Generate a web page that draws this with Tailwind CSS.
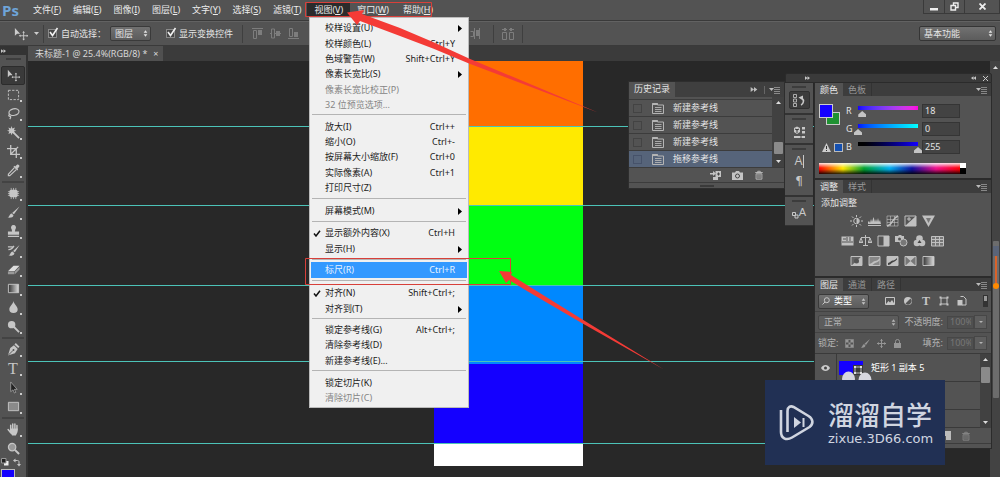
<!DOCTYPE html>
<html lang="zh-CN">
<head>
<meta charset="utf-8">
<title>Photoshop</title>
<script src="https://cdn.jsdelivr.net/npm/@tailwindcss/browser@4"></script>
</head>
<body class="relative flex h-screen flex-col overflow-hidden bg-[#282828] font-['Noto_Sans','Noto_Sans_CJK_SC',sans-serif] text-[9px] leading-[14px] text-[#e4e4e4]">

<svg class="hidden">
  <symbol id="i-move" viewBox="0 0 16 16"><path d="M1 1v9l2.500-2.300H7z" fill="currentColor"/><path d="M11 5.500v9M6.500 10h9" stroke="currentColor" fill="none"/><path d="M11 4.500 9.500 6.500h3zM11 15.500l-1.500-2h3zM5.500 10l2-1.500v3zM16.500 10l-2-1.500v3z" fill="currentColor"/></symbol>
  <symbol id="i-updown" viewBox="0 0 6 8"><path d="M3 0 5.200 3H.8zM3 8 .8 5h4.400z" fill="currentColor"/></symbol>
  <symbol id="i-pmenu" viewBox="0 0 12 8"><path d="M0 2h5L2.500 5z" fill="currentColor"/><path d="M5 1.500h6M5 3.500h6M5 5.500h6M5 7.500h6" stroke="currentColor" stroke-width=".6"/></symbol>
  <symbol id="i-ff" viewBox="0 0 8 6"><path d="M0 0l4 3-4 3zM4 0l4 3-4 3z" fill="currentColor"/></symbol>
  <symbol id="i-snap" viewBox="0 0 12 12"><path d="M.5 1.500h5v1.500h6v8.500H.5z" fill="none" stroke="currentColor"/><path d="M3 5.500h6.500M3 7.500h6.500M3 9.500h6.500" stroke="currentColor" stroke-width=".9"/><path d="M.5 1h5v2h-5z" fill="currentColor"/></symbol>
  <symbol id="i-trash" viewBox="0 0 12 12"><path d="M1.500 3h9M4.500 3V1.500h3V3M2.500 4.500h7V11h-7zM4.800 5v5M7.200 5v5" fill="none" stroke="currentColor"/></symbol>
</svg>

<!-- Menu bar -->
<header class="flex h-[21px] shrink-0 items-center border-b border-[#3a3a3a] bg-[#535353]">
  <span class="w-[27px] pl-[2px] font-['Open_Sans'] text-[15px] font-bold text-[#6ea4d8]">Ps</span>
  <nav class="flex items-center text-[#ececec]">
    <button class="h-[14px] px-[6px]">文件(<u>F</u>)</button>
    <button class="h-[14px] px-[6px]">编辑(<u>E</u>)</button>
    <button class="h-[14px] px-[6px]">图像(<u>I</u>)</button>
    <button class="h-[14px] px-[6px]">图层(<u>L</u>)</button>
    <button class="h-[14px] px-[6px]">文字(<u>Y</u>)</button>
    <button class="h-[14px] px-[6px]">选择(<u>S</u>)</button>
    <button class="h-[14px] px-[6px]">滤镜(<u>T</u>)</button>
    <button class="h-[14px] bg-[#2b2b2b] px-[7px]" aria-expanded="true">视图(<u>V</u>)</button>
    <button class="h-[14px] px-[7px]">窗口(<u>W</u>)</button>
    <button class="h-[14px] px-[7px]">帮助(<u>H</u>)</button>
  </nav>
  <div class="ml-auto flex h-[14px] self-start border border-t-0 border-[#3a3a3a] text-[#eee]">
    <button class="grid w-[21px] place-items-center border-r border-[#3a3a3a]" aria-label="最小化"><svg class="h-2 w-2" viewBox="0 0 8 8"><path d="M0 5h8v2.500H0z" fill="currentColor"/></svg></button>
    <button class="grid w-[20px] place-items-center border-r border-[#3a3a3a]" aria-label="还原"><svg class="h-[9px] w-[9px]" viewBox="0 0 9 9" fill="none" stroke="currentColor" stroke-width="1.400"><path d="M3.500 3V1H8v4.500H6M1 3.500h4.500V8H1z"/></svg></button>
    <button class="grid w-[34px] place-items-center" aria-label="关闭"><svg class="h-[7px] w-[7px]" viewBox="0 0 7 7" stroke="currentColor" stroke-width="1.800"><path d="M.5.500l6 6M6.500.500l-6 6"/></svg></button>
  </div>
</header>

<!-- Options bar -->
<section class="flex h-[25px] shrink-0 items-center border-t border-b border-t-[#626262] border-b-[#3a3a3a] bg-[#535353] pr-1 pl-[14px]">
  <button class="flex items-center gap-[6px] text-[#ccc]" aria-label="移动工具"><svg class="h-[14px] w-[14px]"><use href="#i-move"/></svg><svg class="h-[3px] w-[5px]" viewBox="0 0 5 3"><path d="M0 0h5L2.500 3z" fill="currentColor"/></svg></button>
  <span class="mx-[4px] h-[18px] w-px bg-[#3f3f3f]"></span>
  <label class="flex items-center gap-1">
    <span class="relative"><input type="checkbox" checked class="peer block h-[9px] w-[9px] appearance-none border border-[#8a8a8a] bg-[#454545]"><svg class="pointer-events-none absolute -top-[2px] left-0 hidden h-[11px] w-[11px] peer-checked:block" viewBox="0 0 11 11"><path d="M2 5l2.500 3.500L9.500 1" stroke="#f0f0f0" stroke-width="1.600" fill="none"/></svg></span>自动选择：</label>
  <span class="relative ml-1 flex items-center">
    <select aria-label="自动选择" class="h-[15px] w-[41px] appearance-none rounded-[2px] border border-[#3a3a3a] bg-linear-to-b from-[#717171] to-[#5c5c5c] pl-1 text-[9px] leading-[12px]"><option>图层</option></select>
    <svg class="pointer-events-none absolute right-[3px] h-[7px] w-[5px]"><use href="#i-updown"/></svg>
  </span>
  <label class="ml-[15px] flex items-center gap-1">
    <span class="relative"><input type="checkbox" checked class="peer block h-[9px] w-[9px] appearance-none border border-[#8a8a8a] bg-[#454545]"><svg class="pointer-events-none absolute -top-[2px] left-0 hidden h-[11px] w-[11px] peer-checked:block" viewBox="0 0 11 11"><path d="M2 5l2.500 3.500L9.500 1" stroke="#f0f0f0" stroke-width="1.600" fill="none"/></svg></span>显示变换控件</label>
  <span class="mx-[9px] h-[18px] w-px bg-[#3f3f3f]"></span>
  <div class="flex items-center gap-[7px] text-[#7d7d7d]">
    <button aria-label="顶对齐"><svg class="block h-[11px] w-[11px]" viewBox="0 0 11 11"><path d="M0 .5h11M1.500 2.500h3v8h-3z" stroke="currentColor" fill="none"/><path d="M6 2h4v5H6z" fill="currentColor"/></svg></button>
    <button aria-label="垂直居中对齐"><svg class="block h-[11px] w-[11px]" viewBox="0 0 11 11"><path d="M0 5.500h1M9 5.500h2M1.500 1v9h3V1zM4.500 5.500H6" stroke="currentColor" fill="none"/><path d="M6 3h4v5H6z" fill="currentColor"/></svg></button>
    <button aria-label="底对齐"><svg class="block h-[11px] w-[11px]" viewBox="0 0 11 11"><path d="M0 10.500h11M1.500.500h3v8h-3z" stroke="currentColor" fill="none"/><path d="M6 4h4v5H6z" fill="currentColor"/></svg></button>
  </div>
  <div class="ml-[171px] flex items-center gap-[13px] text-[#7d7d7d]">
    <button aria-label="按右分布"><svg class="block h-[11px] w-[10px]" viewBox="0 0 10 11"><path d="M.5 3.500h3v5h-3M4.500 0v11M9.500 0v11" stroke="currentColor" fill="none"/><path d="M6 2h3v6H6z" fill="currentColor"/></svg></button>
    <span class="h-[18px] w-px bg-[#3f3f3f]"></span>
    <button aria-label="自动对齐图层" class="-mx-[5px]"><svg class="block h-[12px] w-[12px]" viewBox="0 0 12 12"><path d="M.5 4.500h4v7h-4zM7.500 4.500h4v7h-4zM0 1.500h5M7 1.500h5" stroke="currentColor" fill="none"/><path d="M2 0h2v3H2zM8 0h2v3H8z" fill="currentColor"/></svg></button>
    <span class="h-[18px] w-px bg-[#3f3f3f]"></span>
  </div>
  <span class="relative ml-auto flex items-center">
    <select aria-label="工作区" class="h-[15px] w-[77px] appearance-none rounded-[2px] border border-[#353535] bg-linear-to-b from-[#717171] to-[#5c5c5c] pl-1 text-[9px] leading-[12px]"><option>基本功能</option></select>
    <svg class="pointer-events-none absolute right-[3px] h-[7px] w-[5px]"><use href="#i-updown"/></svg>
  </span>
</section>

<main class="flex min-h-0 flex-1">
  <!-- Tool strip -->
  <aside class="flex w-[26px] shrink-0 flex-col items-center overflow-hidden bg-[#535353] text-[#c6c6c6]">
    <div class="flex h-[9px] w-full shrink-0 items-center bg-[#333] pl-[1px]"><svg class="h-[4px] w-[5px]"><use href="#i-ff"/></svg></div>
    <div class="mt-[3px] mb-[6px] h-[2px] w-[15px] shrink-0 bg-[#3d3d3d]"></div>
    <div class="flex flex-col items-center [&>button]:relative [&>button]:grid [&>button]:h-[19px] [&>button]:w-[24px] [&>button]:place-items-center [&_svg]:h-[13px] [&_svg]:w-[13px]">
      <button aria-label="移动" class="rounded-[2px] border border-[#2c2c2c] bg-[#3a3a3a]"><svg><use href="#i-move"/></svg></button>
      <button aria-label="选框" class="after:absolute after:right-[3px] after:bottom-[2px] after:h-[2px] after:w-[2px] after:bg-[#ccc]"><svg viewBox="0 0 14 14"><path d="M1.500 2.500h11v10h-11z" fill="none" stroke="currentColor" stroke-dasharray="2.500 1.500"/></svg></button>
      <button aria-label="套索" class="after:absolute after:right-[3px] after:bottom-[2px] after:h-[2px] after:w-[2px] after:bg-[#ccc]"><svg viewBox="0 0 14 14" fill="none" stroke="currentColor" stroke-width="1.300"><ellipse cx="7.500" cy="5.500" rx="5.500" ry="3.500" transform="rotate(-14 7.500 5.500)"/><path d="M3 8c-1.500.5-1.500 2 0 2s1 1.500 0 3"/></svg></button>
      <button aria-label="魔棒" class="after:absolute after:right-[3px] after:bottom-[2px] after:h-[2px] after:w-[2px] after:bg-[#ccc]"><svg viewBox="0 0 14 14"><path d="M5 0l.8 2.700L8.500 1.500 7.500 4.200 10 5 7.500 6 8.500 8.500 5.800 7.500 5 10 4 7.500 1.500 8.500 2.500 6 0 5l2.500-.8L1.500 1.500 4 2.700z" fill="currentColor"/><path d="M6 6l7 7" stroke="currentColor" stroke-width="2"/></svg></button>
      <button aria-label="裁剪" class="after:absolute after:right-[3px] after:bottom-[2px] after:h-[2px] after:w-[2px] after:bg-[#ccc]"><svg viewBox="0 0 14 14"><path d="M4 0v10h10M0 4h10v10M4 10l8-8" fill="none" stroke="currentColor" stroke-width="1.400"/></svg></button>
      <button aria-label="吸管" class="after:absolute after:right-[3px] after:bottom-[2px] after:h-[2px] after:w-[2px] after:bg-[#ccc]"><svg viewBox="0 0 14 14"><path d="M8 4l-6.500 7v1.500H3L10 6" fill="none" stroke="currentColor" stroke-width="1.300"/><path d="M7 3l1-1 1 .8C11 0 12 .5 12.800 1.200s1 2-1.500 3.800l.7 1-1 1z" fill="currentColor"/></svg></button>
      <div class="my-[1px] h-[2px] w-[22px] bg-[#434343]"></div>
      <button aria-label="修复画笔" class="after:absolute after:right-[3px] after:bottom-[2px] after:h-[2px] after:w-[2px] after:bg-[#ccc]"><svg viewBox="0 0 14 14"><rect x="2.500" y="3" width="9" height="8" rx="2" fill="currentColor"/><path d="M4.500 1v12M7 1v12M9.500 1v12M1 5h12M1 7h12M1 9h12" stroke="currentColor" stroke-width=".8"/></svg></button>
      <button aria-label="画笔" class="after:absolute after:right-[3px] after:bottom-[2px] after:h-[2px] after:w-[2px] after:bg-[#ccc]"><svg viewBox="0 0 14 14"><path d="M13.500.500 7.500 9 5.500 7.500zM5 8l2 2c-.5 2.500-3 3-6.500 2.500C3 11.500 2.500 8.500 5 8z" fill="currentColor"/></svg></button>
      <button aria-label="图章" class="after:absolute after:right-[3px] after:bottom-[2px] after:h-[2px] after:w-[2px] after:bg-[#ccc]"><svg viewBox="0 0 14 14"><path d="M7 0a2.700 2.700 0 0 1 2 4.500L8.500 7H13v3.500H1V7h4.500L5 4.500A2.700 2.700 0 0 1 7 0zM1 11.500h12V13H1z" fill="currentColor"/></svg></button>
      <button aria-label="历史画笔" class="after:absolute after:right-[3px] after:bottom-[2px] after:h-[2px] after:w-[2px] after:bg-[#ccc]"><svg viewBox="0 0 14 14"><path d="M13.500 1 8.500 9 6.500 7.500zM6 8l2 2c-.5 2.500-3 3-6.500 2.500C4 11.500 3.500 8.500 6 8z" fill="currentColor"/><path d="M1 3h6M1.500 6C4 6 6 5 7.500 2" fill="none" stroke="currentColor" stroke-width="1.300"/></svg></button>
      <button aria-label="橡皮擦" class="after:absolute after:right-[3px] after:bottom-[2px] after:h-[2px] after:w-[2px] after:bg-[#ccc]"><svg viewBox="0 0 14 14"><path d="M1 9l6-6h6.500L8 9z" fill="#ddd"/><path d="M1 9.500h7V12H1zM8.500 9.200l5-5V7l-5 5z" fill="#999"/></svg></button>
      <button aria-label="渐变" class="after:absolute after:right-[3px] after:bottom-[2px] after:h-[2px] after:w-[2px] after:bg-[#ccc]"><svg viewBox="0 0 14 14"><defs><linearGradient id="g1"><stop stop-color="#333"/><stop offset="1" stop-color="#ddd"/></linearGradient></defs><path d="M1.500 2.500h11v9h-11z" fill="url(#g1)" stroke="currentColor"/></svg></button>
      <button aria-label="模糊" class="after:absolute after:right-[3px] after:bottom-[2px] after:h-[2px] after:w-[2px] after:bg-[#ccc]"><svg viewBox="0 0 14 14"><path d="M7 0c.5 3.500 4.500 6 4.500 9a4.500 4 0 0 1-9 0C2.500 6 6.500 3.500 7 0z" fill="currentColor"/></svg></button>
      <button aria-label="减淡" class="after:absolute after:right-[3px] after:bottom-[2px] after:h-[2px] after:w-[2px] after:bg-[#ccc]"><svg viewBox="0 0 14 14"><circle cx="5" cy="5" r="4" fill="currentColor"/><path d="M7 7l6 6" stroke="currentColor" stroke-width="2"/></svg></button>
      <div class="my-[1px] h-[2px] w-[22px] bg-[#434343]"></div>
      <button aria-label="钢笔" class="after:absolute after:right-[3px] after:bottom-[2px] after:h-[2px] after:w-[2px] after:bg-[#ccc]"><svg viewBox="0 0 14 14"><path d="M9.500 0 13.500 4l-1.500 1.500L8 1.500zM7.500 2.500l4 4L8.500 11 1 13.500 3.500 5.500z" fill="currentColor"/><path d="M1 13.500 6.500 8" stroke="#535353"/><circle cx="7" cy="7.500" r="1" fill="#535353"/></svg></button>
      <button aria-label="文字" class="font-['Liberation_Serif'] text-[16px] leading-[16px] after:absolute after:right-[3px] after:bottom-[2px] after:h-[2px] after:w-[2px] after:bg-[#ccc]">T</button>
      <button aria-label="路径选择" class="after:absolute after:right-[3px] after:bottom-[2px] after:h-[2px] after:w-[2px] after:bg-[#ccc]"><svg viewBox="0 0 14 14"><path d="M4 1v10.500l2.500-2 1.500 3.500 1.500-.8L8 9h3z" fill="#222" stroke="#aaa" stroke-width=".8"/></svg></button>
      <button aria-label="矩形" class="after:absolute after:right-[3px] after:bottom-[2px] after:h-[2px] after:w-[2px] after:bg-[#ccc]"><svg viewBox="0 0 14 14"><path d="M1.500 2.500h11v9h-11z" fill="#8a8a8a" stroke="currentColor"/></svg></button>
      <div class="my-[1px] h-[2px] w-[22px] bg-[#434343]"></div>
      <button aria-label="抓手" class="after:absolute after:right-[3px] after:bottom-[2px] after:h-[2px] after:w-[2px] after:bg-[#ccc]"><svg viewBox="0 0 14 14"><path d="M4 7V2.500M6.200 6V1M8.500 6V1.200M10.700 7V2.800M1.200 7 4 10.500" stroke="currentColor" stroke-width="1.600" stroke-linecap="round"/><path d="M3.300 6h8.200c.5 3-.5 5-2 7.500H5.500C4.500 12 3 10 3 9z" fill="currentColor"/></svg></button>
      <button aria-label="缩放"><svg viewBox="0 0 14 14"><circle cx="5.500" cy="5.500" r="4" fill="#999" stroke="currentColor" stroke-width="1.300"/><path d="M8.500 8.500l4.500 4.500" stroke="currentColor" stroke-width="2.200"/></svg></button>
    </div>
    <div class="flex w-full shrink-0 justify-between px-[1px] pr-[5px]">
      <svg class="h-[9px] w-[8px]" viewBox="0 0 8 9"><path d="M3 3h4.500v4.500H3z" fill="#eee"/><path d="M.5.500H5V5H.5z" fill="#222" stroke="#999"/></svg>
      <svg class="h-[9px] w-[8px]" viewBox="0 0 8 9"><path d="M2 2.500h2.500c1 0 1.500.5 1.500 1.500v2" fill="none" stroke="currentColor"/><path d="M0 2.500 2.500.500v4zM6 8.500 4 6h4z" fill="currentColor"/></svg>
    </div>
    <button aria-label="前景色" class="mt-[2px] mr-auto ml-[1px] h-[14px] w-[14px] shrink-0 border border-[#bbb] bg-[#1400ff]"></button>
  </aside>

  <!-- Document -->
  <section class="flex min-w-0 flex-1 flex-col border-l-2 border-[#333]">
    <div class="flex h-[15px] shrink-0 bg-[#3b3b3b]">
      <div class="flex items-center gap-[6px] bg-[#505050] pr-[4px] pl-[7px] text-[#d8d8d8]">未标题-1 @ 25.4%(RGB/8) * <button aria-label="关闭文档" class="text-[9px] leading-[10px]">×</button></div>
    </div>
    <div class="relative flex min-h-0 flex-1">
      <div class="absolute top-0 left-[406px] flex w-[149px] flex-col">
        <div class="h-[65px] bg-[#ff6e00]"></div>
        <div class="h-[79px] bg-[#ffea00]"></div>
        <div class="h-[80px] bg-[#00ff12]"></div>
        <div class="h-[79px] bg-[#0088ff]"></div>
        <div class="h-[79px] bg-[#1400ff]"></div>
        <div class="h-[23px] bg-white"></div>
      </div>
      <div class="absolute inset-x-0 top-[65px] h-px bg-[#4cc3b8]"></div>
      <div class="absolute inset-x-0 top-[144px] h-px bg-[#4cc3b8]"></div>
      <div class="absolute inset-x-0 top-[224px] h-px bg-[#4cc3b8]"></div>
      <div class="absolute inset-x-0 top-[300px] h-px bg-[#4cc3b8]"></div>
      <div class="absolute inset-x-0 top-[382px] h-px bg-[#4cc3b8]"></div>
      <div class="relative ml-auto w-[10px] bg-[#434343]">
        <svg class="mx-auto mt-[5px] h-[3px] w-[5px]" viewBox="0 0 5 3"><path d="M0 3h5L2.500 0z" fill="#ddd"/></svg>
        <div class="mt-[172px] ml-[3px] flex h-[157px] w-[6px] flex-col items-center rounded-[1px] bg-[#6c6c6c]">
          <div class="mt-[5px] h-[10px] w-[6px] shrink-0 bg-[#5a6478]"></div>
          <div class="h-[27px] w-[2px] shrink-0 bg-[#d9622a]"></div>
          <div class="h-[6px] w-[6px] shrink-0 rounded-full bg-[#ff8a00]"></div>
        </div>
      </div>
    </div>
  </section>
</main>

<!-- History panel -->
<section class="absolute top-[81px] right-[215px] flex w-[157px] flex-col border border-[#2e2e2e] bg-[#535353]">
  <div class="flex h-[15px] items-center bg-[#3f3f3f] pr-[3px] text-[#bdbdbd]">
    <h2 class="h-full bg-[#535353] px-[5px] text-[#e4e4e4]">历史记录</h2>
    <svg class="ml-auto h-[5px] w-[8px]"><use href="#i-ff"/></svg>
    <span class="mr-[4px] ml-[6px] h-[8px] w-px bg-[#666]"></span>
    <svg class="h-[8px] w-[12px]"><use href="#i-pmenu"/></svg>
  </div>
  <div class="flex">
    <ul class="min-w-0 flex-1 pt-[2px] [&>li]:flex [&>li]:h-[17px] [&>li]:items-center [&>li]:border-t [&>li]:border-[#3c3c3c] [&>li]:pl-[4px]">
      <li><input type="checkbox" aria-label="历史源 1" class="h-[9px] w-[9px] appearance-none border border-[#434343]"><svg class="mr-[9px] ml-[10px] h-[12px] w-[12px] text-[#b4b4b4]"><use href="#i-snap"/></svg>新建参考线</li>
      <li><input type="checkbox" aria-label="历史源 2" class="h-[9px] w-[9px] appearance-none border border-[#434343]"><svg class="mr-[9px] ml-[10px] h-[12px] w-[12px] text-[#b4b4b4]"><use href="#i-snap"/></svg>新建参考线</li>
      <li><input type="checkbox" aria-label="历史源 3" class="h-[9px] w-[9px] appearance-none border border-[#434343]"><svg class="mr-[9px] ml-[10px] h-[12px] w-[12px] text-[#b4b4b4]"><use href="#i-snap"/></svg>新建参考线</li>
      <li class="bg-[#56647a]"><input type="checkbox" aria-label="历史源 4" class="h-[9px] w-[9px] appearance-none border border-[#46526a]"><svg class="mr-[9px] ml-[10px] h-[12px] w-[12px] text-[#b4b4b4]"><use href="#i-snap"/></svg>拖移参考线</li>
    </ul>
    <div class="flex w-[12px] flex-col items-center bg-[#414141] py-[4px] text-[#ddd]">
      <svg class="h-[3px] w-[5px]" viewBox="0 0 5 3"><path d="M0 3h5L2.500 0z" fill="currentColor"/></svg>
      <div class="mt-auto mb-[6px] h-[12px] w-[9px] rounded-[1px] bg-[#8a8a8a]"></div>
      <svg class="h-[3px] w-[5px]" viewBox="0 0 5 3"><path d="M0 0h5L2.500 3z" fill="currentColor"/></svg>
    </div>
  </div>
  <div class="flex h-[15px] items-center justify-end gap-[11px] border-t border-[#3c3c3c] pr-[20px] text-[#c4c4c4]">
    <button aria-label="新建文档"><svg class="block h-[10px] w-[11px]" viewBox="0 0 11 10"><path d="M0 3h3V1l3 2.500L3 6V4.500H0z" fill="currentColor"/><path d="M5.500 1H11v6H8v3H3V7h2.500z" fill="currentColor"/><path d="M7 4h3M8.500 2.500v3" stroke="#444"/></svg></button>
    <button aria-label="新建快照"><svg class="block h-[9px] w-[11px]" viewBox="0 0 11 9"><path d="M0 1.500h3L4 0h3l1 1.500h3V9H0z" fill="currentColor"/><circle cx="5.500" cy="5" r="2" fill="none" stroke="#444"/></svg></button>
    <button aria-label="删除"><svg class="block h-[10px] w-[10px]"><use href="#i-trash"/></svg></button>
  </div>
  <div class="grid h-[6px] place-items-center border-t border-[#3c3c3c]"><span class="h-[2px] w-[14px] bg-[#3a3a3a]"></span></div>
</section>

<!-- Panel dock -->
<section class="absolute top-[73px] right-[8px] w-[207px]">
  <div class="flex h-[10px] items-center rounded-t-[2px] border border-[#2b2b2b] bg-[#3a3a3a] pr-[3px] text-[#c8c8c8]">
    <svg class="ml-[19px] h-[4px] w-[5px]"><use href="#i-ff"/></svg>
    <svg class="ml-auto h-[4px] w-[5px] rotate-180"><use href="#i-ff"/></svg>
    <svg class="ml-[7px] h-[5px] w-[5px]" viewBox="0 0 5 5"><path d="M0 0l5 5M5 0 0 5" stroke="currentColor"/></svg>
  </div>
  <div class="flex items-start justify-between">
    <div class="flex w-[28px] flex-col gap-[2px] bg-[#333] pb-[1px] text-[#c8c8c8] [&>div]:flex [&>div]:flex-col [&>div]:items-center [&>div]:bg-[#535353] [&>div]:pt-[3px] [&>div>span]:h-[2px] [&>div>span]:w-[14px] [&>div>span]:bg-[#3c3c3c]">
      <div class="h-[30px]"><span></span>
        <button aria-label="历史记录" class="mt-[3px] grid h-[18px] w-[21px] place-items-center rounded-[2px] border border-[#303030] bg-[#3c3c3c]"><svg class="h-[13px] w-[12px]" viewBox="0 0 12 13"><path d="M.5.500h3v3h-3zM.5 5h3v3h-3zM.5 9.500h3v3h-3z" stroke="currentColor" stroke-width=".8" fill="none"/><path d="M8 11c2.500-1 3.500-5 1-7" stroke="currentColor" stroke-width="1.500" fill="none"/><path d="M5.500 3.500 10 1.500v5z" fill="currentColor"/></svg></button></div>
      <div class="h-[28px]"><span></span>
        <button aria-label="属性" class="mt-[6px]"><svg class="block h-[13px] w-[13px]" viewBox="0 0 13 13"><path d="M1 2l3-1.500L7 2v4L4 8 1 6z" fill="currentColor"/><path d="M2 3l2 1 2-1M4 4v3" stroke="#444"/><path d="M9 1h3v2.500H9zM9 5h3v2.500H9z" fill="currentColor"/><path d="M1 10h11v2H1z" fill="currentColor"/><path d="M8 9v4" stroke="#444"/></svg></button></div>
      <div class="h-[50px]"><span></span>
        <button aria-label="字符" class="mt-[4px] flex items-center font-['Liberation_Sans'] text-[12px] leading-[14px]">A<i class="h-[13px] w-px bg-[#c8c8c8]"></i></button>
        <button aria-label="段落" class="mt-[6px] font-['DejaVu_Sans'] text-[12px] leading-[14px]">¶</button></div>
      <div class="h-[28px]"><span></span>
        <button aria-label="字符样式" class="mt-[3px] flex items-end font-['Liberation_Sans'] text-[11px] leading-[14px]"><svg class="h-[9px] w-[7px]" viewBox="0 0 7 9"><path d="M.5 2.500h3v3h-3zM3 5h3v3H3z" stroke="currentColor" fill="none"/></svg>A</button></div>
    </div>
    <div class="flex w-[178px] flex-col gap-[2px] border border-t-0 border-[#2b2b2b] bg-[#2b2b2b]">
      <!-- Color -->
      <section class="bg-[#535353]">
        <div class="flex h-[13px] items-center bg-[#3d3d3d] pr-[3px] leading-[13px] text-[#979797]">
          <button class="h-full bg-[#535353] px-[5px] text-[#e8e8e8]">颜色</button><button class="h-full border-r border-[#333] px-[5px]">色板</button>
          <svg class="ml-auto h-[8px] w-[12px] text-[#bbb]"><use href="#i-pmenu"/></svg>
        </div>
        <div class="flex h-[67px] pt-[8px] pl-[4px]">
          <div class="flex w-[25px] flex-col">
            <div class="relative h-[22px]"><button aria-label="背景色" class="absolute top-[8px] left-[7px] h-[13px] w-[14px] border border-[#ccc] bg-[#1f9132]"></button><button aria-label="前景色" class="absolute top-0 left-0 h-[14px] w-[14px] border border-[#ccc] bg-[#1400ff]"></button></div>
            <div class="mt-[17px] ml-[3px] flex items-center gap-[3px]"><svg class="h-[9px] w-[9px] shrink-0" viewBox="0 0 9 9"><path d="M4.500 0 9 9H0z" fill="#ccc"/><path d="M4.500 3v3M4.500 7v1" stroke="#333"/></svg><i class="h-[9px] w-[9px] shrink-0 border border-[#bbb] bg-[#1550b0]"></i></div>
          </div>
          <div class="ml-[2px] flex flex-col gap-[4px] [&>label]:flex [&>label]:h-[14px] [&>label]:items-center">
            <label><span class="w-[8px] leading-[12px]">R</span><input type="range" min="0" max="255" value="18" class="mt-px h-[12px] w-[68px] appearance-none bg-linear-to-r from-[#1400ff] to-[#ff00e0] bg-[size:60px_4px] bg-[position:center_top] bg-no-repeat [&::-webkit-slider-thumb]:mt-[5px] [&::-webkit-slider-thumb]:h-[6px] [&::-webkit-slider-thumb]:w-[8px] [&::-webkit-slider-thumb]:appearance-none [&::-webkit-slider-thumb]:bg-[#c4c4c4] [&::-webkit-slider-thumb]:[clip-path:polygon(50%_0,100%_60%,100%_100%,0_100%,0_60%)]"><input aria-label="R" value="18" class="h-[14px] w-[38px] border border-[#353535] bg-[#434343] pl-[2px]"></label>
            <label><span class="w-[8px] leading-[12px]">G</span><input type="range" min="0" max="255" value="0" class="mt-px h-[12px] w-[68px] appearance-none bg-linear-to-r from-[#1400ff] to-[#12ffff] bg-[size:60px_4px] bg-[position:center_top] bg-no-repeat [&::-webkit-slider-thumb]:mt-[5px] [&::-webkit-slider-thumb]:h-[6px] [&::-webkit-slider-thumb]:w-[8px] [&::-webkit-slider-thumb]:appearance-none [&::-webkit-slider-thumb]:bg-[#c4c4c4] [&::-webkit-slider-thumb]:[clip-path:polygon(50%_0,100%_60%,100%_100%,0_100%,0_60%)]"><input aria-label="G" value="0" class="h-[14px] w-[38px] border border-[#353535] bg-[#434343] pl-[2px]"></label>
            <label><span class="w-[8px] leading-[12px]">B</span><input type="range" min="0" max="255" value="255" class="mt-px h-[12px] w-[68px] appearance-none bg-linear-to-r from-[#000] to-[#1400ff] bg-[size:60px_4px] bg-[position:center_top] bg-no-repeat [&::-webkit-slider-thumb]:mt-[5px] [&::-webkit-slider-thumb]:h-[6px] [&::-webkit-slider-thumb]:w-[8px] [&::-webkit-slider-thumb]:appearance-none [&::-webkit-slider-thumb]:bg-[#c4c4c4] [&::-webkit-slider-thumb]:[clip-path:polygon(50%_0,100%_60%,100%_100%,0_100%,0_60%)]"><input aria-label="B" value="255" class="h-[14px] w-[38px] border border-[#353535] bg-[#434343] pl-[2px]"></label>
          </div>
        </div>
        <div class="flex pb-[4px] pl-[4px]">
          <div class="h-[11px] w-[141px] bg-[linear-gradient(to_bottom,rgba(255,255,255,.9),transparent_45%,transparent_55%,rgba(0,0,0,.85)),linear-gradient(to_right,#f00,#ffe800_17%,#00a030_32%,#00b0f0_50%,#1010a0_66%,#f0108c_83%,#f00)]"></div>
          <div class="h-[11px] w-[6px] bg-linear-to-b from-white from-50% to-black to-50%"></div>
        </div>
      </section>
      <!-- Adjustments -->
      <section class="bg-[#535353]">
        <div class="flex h-[13px] items-center bg-[#3d3d3d] pr-[3px] leading-[13px] text-[#979797]">
          <button class="h-full bg-[#535353] px-[5px] text-[#e8e8e8]">调整</button><button class="h-full border-r border-[#333] px-[5px]">样式</button>
          <svg class="ml-auto h-[8px] w-[12px] text-[#bbb]"><use href="#i-pmenu"/></svg>
        </div>
        <div class="h-[83px] pt-[3px] pl-[6px]">
          <h3 class="leading-[13px]">添加调整</h3>
          <div class="mt-[6px] flex flex-col items-center gap-[8px] pr-[27px] text-[#c0c0c0] [&_svg]:h-[12px] [&_svg]:w-[13px] [&>div]:flex [&>div]:gap-[5px]">
            <div>
              <svg viewBox="0 0 13 12"><circle cx="6.500" cy="6" r="2.800" fill="none" stroke="currentColor"/><path d="M6.500 3.500v5a2.500 2.500 0 0 0 0-5z" fill="currentColor"/><path d="M6.500 0v2M6.500 10v2M0 6h2M11 6h2M2 1.500 3.500 3M11 1.500 9.500 3M2 10.500 3.500 9M11 10.500 9.500 9" stroke="currentColor"/></svg>
              <svg viewBox="0 0 13 12"><path d="M0 9V7l1-1 1 2 1-4 1 3 1.500-5L7 7l1-3 1 3 1-4 1 4 1-2 1 4zM0 10h13v1H0z" fill="currentColor"/></svg>
              <svg viewBox="0 0 13 12"><path d="M1 1h11v10H1zM4.500 1v10M8.500 1v10M1 4.500h11M1 7.500h11" fill="none" stroke="currentColor" stroke-width=".6"/><path d="M1 11C7 10 6 3 12 1" fill="none" stroke="currentColor" stroke-width="1.500"/></svg>
              <svg viewBox="0 0 13 12"><path d="M1 1h11v10H1z" fill="#555" stroke="currentColor"/><path d="M1 11 12 1v10z" fill="currentColor"/><path d="M3 4h4M5 2v4" stroke="currentColor"/></svg>
              <svg viewBox="0 0 13 12"><path d="M0 .5h13L6.500 12z" fill="currentColor"/><path d="M4 3h5L6.500 8z" fill="#777"/></svg>
            </div>
            <div>
              <svg viewBox="0 0 13 12"><path d="M.5 1.500h12v9H.5z" fill="currentColor"/><path d="M2 4h3M6 2v4M9 2v4M1 7h11" stroke="#555"/></svg>
              <svg viewBox="0 0 13 12"><path d="M6.500 0v10M2 2.500h9M4 10.500h5M0 7.500h4M9 7.500h4M2 3 .5 7h3zM11 3 9.500 7h3z" fill="none" stroke="currentColor"/></svg>
              <svg viewBox="0 0 13 12"><path d="M1 1h11v10H1z" fill="#555" stroke="currentColor"/><path d="M6.500 1H12v10H6.500z" fill="currentColor"/></svg>
              <svg viewBox="0 0 13 12"><path d="M0 1h3l1-1h2l1 1h2v6H0z" fill="currentColor"/><circle cx="8.500" cy="7.500" r="3.500" fill="#777" stroke="currentColor"/><circle cx="4.500" cy="4" r="1.500" fill="#555"/></svg>
              <svg viewBox="0 0 13 12"><circle cx="6.500" cy="3.500" r="3.300" fill="currentColor"/><circle cx="4" cy="8" r="3.300" fill="currentColor"/><circle cx="9" cy="8" r="3.300" fill="currentColor"/><path d="M6.500 5 8.500 8h-4z" fill="#444"/></svg>
              <svg viewBox="0 0 13 12"><path d="M.5 1.500h12v9.500H.5z" fill="#777" stroke="currentColor"/><path d="M4.500 1v10M8.500 1v10M0 4.500h13M0 7.500h13" stroke="currentColor"/></svg>
            </div>
            <div>
              <svg viewBox="0 0 13 12"><path d="M1 1.500h11v9H1z" fill="#666" stroke="currentColor"/><path d="M1 11 12 1v10z" fill="currentColor"/><circle cx="6.500" cy="6" r="2.500" fill="#555"/></svg>
              <svg viewBox="0 0 13 12"><path d="M1 1.500h11v9H1z" fill="#888" stroke="currentColor"/><path d="M1 9c3 0 4-3 6-3s3-1 5-3v2c-2 2-3 2-5 3s-3 3-6 3z" fill="currentColor"/></svg>
              <svg viewBox="0 0 13 12"><path d="M1 1.500h11v9H1z" fill="currentColor" stroke="currentColor"/><path d="M2 8c2 0 3-2.500 4.500-2.500S9 5 11 3v1.500C9 6.500 8 6.500 6.500 7.500S4 10 2 10z" fill="#444"/></svg>
              <svg viewBox="0 0 13 12"><path d="M1 1.500h11v9H1z" fill="#777" stroke="currentColor"/><path d="M1 1l5.500 5L12 1zM1 11l5.500-5 5.500 5z" fill="currentColor"/></svg>
              <svg viewBox="0 0 13 12"><path d="M1 1.500h11v9H1z" fill="url(#g1)" stroke="currentColor"/></svg>
            </div>
          </div>
        </div>
      </section>
      <!-- Layers -->
      <section class="bg-[#535353]">
        <div class="flex h-[13px] items-center bg-[#3d3d3d] pr-[3px] leading-[13px] text-[#979797]">
          <button class="h-full bg-[#535353] px-[5px] text-[#e8e8e8]">图层</button><button class="h-full border-r border-[#333] px-[5px]">通道</button><button class="h-full border-r border-[#333] px-[5px]">路径</button>
          <svg class="ml-auto h-[8px] w-[12px] text-[#bbb]"><use href="#i-pmenu"/></svg>
        </div>
        <div class="flex h-[20px] items-center pr-[3px] pl-[3px] text-[#c6c6c6]">
          <span class="relative flex items-center">
            <svg class="pointer-events-none absolute left-[4px] h-[8px] w-[8px]" viewBox="0 0 8 8"><circle cx="4.800" cy="3.200" r="2.500" fill="none" stroke="currentColor"/><path d="M3 5 .5 7.500" stroke="currentColor"/></svg>
            <select aria-label="筛选类型" class="h-[15px] w-[51px] appearance-none rounded-[2px] border border-[#3a3a3a] bg-linear-to-b from-[#717171] to-[#5c5c5c] pl-[15px] text-[9px] leading-[12px] text-white"><option>类型</option></select>
            <svg class="pointer-events-none absolute right-[3px] h-[7px] w-[5px]"><use href="#i-updown"/></svg>
          </span>
          <div class="ml-[16px] flex flex-1 items-center gap-[8px] [&_svg]:block [&_svg]:h-[10px] [&_svg]:w-[10px]">
            <button aria-label="像素图层"><svg viewBox="0 0 10 10"><path d="M.5 1.500h9v7h-9z" fill="none" stroke="currentColor"/><path d="M1 8l2.500-3L5 6.500 7 4l2.500 4z" fill="currentColor"/></svg></button>
            <button aria-label="调整图层"><svg viewBox="0 0 10 10"><circle cx="5" cy="5" r="4" fill="currentColor"/><path d="M2.500 7.500A3.500 3.500 0 0 0 7.500 2.500z" fill="#555"/></svg></button>
            <button aria-label="文字图层" class="w-[10px] font-['Liberation_Serif'] text-[12px] leading-[12px] font-bold">T</button>
            <button aria-label="形状图层"><svg viewBox="0 0 10 10"><path d="M2 2h6v6H2z" fill="none" stroke="currentColor"/><path d="M.5.500h2v2h-2zM7.500.500h2v2h-2zM.5 7.500h2v2h-2zM7.500 7.500h2v2h-2z" fill="currentColor"/></svg></button>
            <button aria-label="智能对象"><svg viewBox="0 0 10 10"><path d="M3.500.500h3l2.500 2.500V9H5" fill="none" stroke="currentColor"/><path d="M.5 4h5v5.500h-5z" fill="currentColor"/></svg></button>
            <span class="ml-auto h-[12px] w-[5px] border border-[#333] bg-linear-to-b from-[#999] from-50% to-[#333] to-50%"></span>
          </div>
        </div>
        <div class="flex h-[21px] items-center border-t border-[#434343] pr-[4px] pl-[3px] text-[#b4b4b4]">
          <span class="relative flex items-center">
            <select aria-label="混合模式" class="h-[15px] w-[81px] appearance-none rounded-[2px] border border-[#454545] bg-[#5c5c5c] pl-[5px] text-[9px] leading-[12px]"><option>正常</option></select>
            <svg class="pointer-events-none absolute right-[3px] h-[7px] w-[5px]"><use href="#i-updown"/></svg>
          </span>
          <label class="ml-auto flex items-center">不透明度:<input value="100%" disabled class="ml-[4px] h-[13px] w-[27px] border border-[#474747] bg-[#505050] px-[2px] text-[#777]"></label>
          <button aria-label="不透明度选项" class="grid h-[14px] w-[13px] place-items-center border border-[#474747] bg-[#5e5e5e]"><svg class="h-[2px] w-[4px]" viewBox="0 0 4 2"><path d="M0 0h4L2 2z" fill="currentColor"/></svg></button>
        </div>
        <div class="flex h-[21px] items-center border-t border-[#434343] pr-[4px] pl-[3px] text-[#b4b4b4]">
          锁定:
          <div class="ml-[7px] flex items-center gap-[7px] text-[#969696] [&_svg]:block [&_svg]:h-[9px] [&_svg]:w-[9px]">
            <button aria-label="锁定透明像素"><svg viewBox="0 0 9 9"><path d="M.5.500h8v8h-8z" fill="none" stroke="currentColor" stroke-width=".7"/><path d="M1 1h2.500v2.500H1zM5.500 1H8v2.500H5.500zM3.500 3.500h2v2h-2zM1 5.500h2.500V8H1zM5.500 5.500H8V8H5.500z" fill="currentColor"/></svg></button>
            <button aria-label="锁定图像像素"><svg viewBox="0 0 9 9"><path d="M9 0 5 6 3.500 4.800zM3 5l1.500 1.500C4 8.500 2 9 0 8.500 1.500 8 1.500 5.500 3 5z" fill="currentColor"/></svg></button>
            <button aria-label="锁定位置"><svg viewBox="0 0 9 9"><path d="M4.500 0v9M0 4.500h9" stroke="currentColor"/><path d="M4.500 0 6 2H3zM4.500 9 3 7h3zM0 4.500 2 3v3zM9 4.500 7 3v3z" fill="currentColor"/></svg></button>
            <button aria-label="锁定全部"><svg viewBox="0 0 9 9"><path d="M1 4h7v5H1z" fill="currentColor"/><path d="M2.500 4V2.500a2 2 0 0 1 4 0V4" fill="none" stroke="currentColor"/></svg></button>
          </div>
          <label class="ml-auto flex items-center">填充:<input value="100%" disabled class="ml-[4px] h-[13px] w-[27px] border border-[#474747] bg-[#505050] px-[2px] text-[#777]"></label>
          <button aria-label="填充选项" class="grid h-[14px] w-[13px] place-items-center border border-[#474747] bg-[#5e5e5e]"><svg class="h-[2px] w-[4px]" viewBox="0 0 4 2"><path d="M0 0h4L2 2z" fill="currentColor"/></svg></button>
        </div>
        <div class="flex border-t border-[#3a3a3a]">
          <ul class="min-w-0 flex-1 [&>li]:flex [&>li]:h-[28px] [&>li]:items-center [&>li]:border-b [&>li]:border-[#3a3a3a]">
            <li>
              <button aria-label="显示图层" class="grid h-full w-[22px] place-items-center border-r border-[#3a3a3a]"><svg class="h-[6px] w-[9px]" viewBox="0 0 9 6"><path d="M0 3c2-4 7-4 9 0-2 4-7 4-9 0z" fill="#ccc"/><circle cx="4.500" cy="3" r="1.500" fill="#444"/></svg></button>
              <svg class="ml-[2px] h-[14px] w-[24px]" viewBox="0 0 24 14"><path d="M0 0h24v14H0z" fill="#1400ff"/><path d="M14 4h10v10H14z" fill="#3a3a3a"/><path d="M16 6h6v6h-6z" fill="none" stroke="#bbb"/><path d="M15 5h2v2h-2zM21 5h2v2h-2zM15 11h2v2h-2zM21 11h2v2h-2z" fill="#ddd"/></svg>
              <span class="ml-[8px] text-white">矩形 1 副本 5</span>
            </li>
            <li></li>
            <li class="!h-[18px]"></li>
          </ul>
          <div class="flex w-[11px] flex-col items-center bg-[#414141] py-[4px] text-[#ddd]">
            <svg class="h-[3px] w-[5px]" viewBox="0 0 5 3"><path d="M0 3h5L2.500 0z" fill="currentColor"/></svg>
            <div class="mt-[6px] mb-auto h-[16px] w-[9px] rounded-[1px] bg-[#8a8a8a]"></div>
            <svg class="h-[3px] w-[5px]" viewBox="0 0 5 3"><path d="M0 0h5L2.500 3z" fill="currentColor"/></svg>
          </div>
        </div>
        <div class="flex h-[15px] items-center justify-end gap-[10px] pr-[20px] text-[#8c8c8c]">
          <button aria-label="新建图层"><svg class="block h-[9px] w-[9px]" viewBox="0 0 9 9"><path d="M0 0h9v9H4V5H0z" fill="#bbb"/></svg></button>
          <button aria-label="删除图层"><svg class="block h-[10px] w-[10px]"><use href="#i-trash"/></svg></button>
        </div>
        <div class="h-[5px] border-t border-[#3c3c3c]"></div>
      </section>
    </div>
  </div>
</section>

<!-- View menu -->
<div role="menu" class="absolute top-[17px] left-[309px] flex w-[160px] flex-col border border-[#bbb] bg-[#f0f0f0] px-px pt-[2px] pb-[2px] text-[#1c1c1c] [&>button]:flex [&>button]:h-[15px] [&>button]:items-center [&>button]:justify-between [&>button]:pr-[12px] [&>button]:pl-[14px] [&>hr]:mx-px [&>hr]:h-px [&>hr]:border-0 [&>hr]:bg-[#b4b4b4]">
  <button class="!h-[16px] !pr-[5px]">校样设置(U)<svg class="h-[7px] w-[4px]" viewBox="0 0 4 7"><path d="M0 0l4 3.500L0 7z"/></svg></button>
  <button>校样颜色(L)<span>Ctrl+Y</span></button>
  <button>色域警告(W)<span>Shift+Ctrl+Y</span></button>
  <button class="!h-[16px] !pr-[5px]">像素长宽比(S)<svg class="h-[7px] w-[4px]" viewBox="0 0 4 7"><path d="M0 0l4 3.500L0 7z"/></svg></button>
  <button disabled class="text-[#858585]">像素长宽比校正(P)</button>
  <button disabled class="text-[#858585]">32 位预览选项...</button>
  <hr class="mt-[2px] mb-[4px]">
  <button>放大(I)<span>Ctrl++</span></button>
  <button>缩小(O)<span>Ctrl+-</span></button>
  <button class="!h-[16px]">按屏幕大小缩放(F)<span>Ctrl+0</span></button>
  <button>实际像素(A)<span>Ctrl+1</span></button>
  <button class="!h-[16px]">打印尺寸(Z)</button>
  <hr class="mt-[2px] mb-[4px]">
  <button class="!h-[16px] !pr-[5px]">屏幕模式(M)<svg class="h-[7px] w-[4px]" viewBox="0 0 4 7"><path d="M0 0l4 3.500L0 7z"/></svg></button>
  <hr class="mt-[2px] mb-[3px]">
  <button class="!h-[16px] !pl-[2px]"><svg class="mr-[4px] h-[7px] w-[8px]" viewBox="0 0 8 7"><path d="M1 3.500 3 6 7 .8" fill="none" stroke="#111" stroke-width="1.500"/></svg>显示额外内容(X)<span class="ml-auto">Ctrl+H</span></button>
  <button class="!h-[16px] !pr-[5px]">显示(H)<svg class="h-[7px] w-[4px]" viewBox="0 0 4 7"><path d="M0 0l4 3.500L0 7z"/></svg></button>
  <hr class="mt-[2px] mb-[2px]">
  <button class="!h-[16px] bg-[#3399ff] text-[#e8f3ff]">标尺(R)<span>Ctrl+R</span></button>
  <hr class="mt-[2px] mb-[4px]">
  <button class="!h-[16px] !pl-[2px]"><svg class="mr-[4px] h-[7px] w-[8px]" viewBox="0 0 8 7"><path d="M1 3.500 3 6 7 .8" fill="none" stroke="#111" stroke-width="1.500"/></svg>对齐(N)<span class="ml-auto">Shift+Ctrl+;</span></button>
  <button class="!h-[16px] !pr-[5px]">对齐到(T)<svg class="h-[7px] w-[4px]" viewBox="0 0 4 7"><path d="M0 0l4 3.500L0 7z"/></svg></button>
  <hr class="mt-[1px] mb-[3px]">
  <button>锁定参考线(G)<span>Alt+Ctrl+;</span></button>
  <button class="!h-[16px]">清除参考线(D)</button>
  <button>新建参考线(E)...</button>
  <hr class="mt-[2px] mb-[4px]">
  <button>锁定切片(K)</button>
  <button disabled class="text-[#858585]">清除切片(C)</button>
</div>

<!-- Annotations -->
<svg class="pointer-events-none absolute top-0 left-0 h-[400px] w-[700px]" viewBox="0 0 700 400">
  <path d="M305.500 2.500h126v14h-126zM305.500 258.500h205v26h-205z" fill="none" stroke="#d8403a"/>
  <path d="M347 12.500 364 10 362 14 400 28 433 42 469 58.500 598 112.500 469 63.500 433 48.500 400 36 360 21 357 25z" fill="#f43b36"/>
  <path d="M499 271 512 272 511 275 527 285 580 318 664 369.500 580 322 527 291 509 280 506 283z" fill="#f43b36"/>
</svg>

<!-- Watermark -->
<svg class="absolute top-[371px] right-[127px] h-[16px] w-[32px]" viewBox="0 0 32 16"><ellipse cx="7.500" cy="8" rx="6.500" ry="7.500" fill="#d6d6de"/><ellipse cx="24" cy="9" rx="6.500" ry="7.500" fill="#d6d6de"/></svg>
<div class="absolute top-[380px] right-[55px] flex h-[85px] w-[180px] items-center gap-[13px] bg-[#213054] pl-[14px] text-[#d0d5e0]">
  <svg class="h-[37px] w-[36px] shrink-0" viewBox="0 0 36 37" fill="none" stroke="currentColor" stroke-width="2.600"><path d="M8.500 28V7c0-4 3-5.500 6-4l15 9c5 3 5 8 1 11L13 33.500C7 37 2 34 2 28V6"/><path d="M15 13l7 5.500-7 5.500z" fill="currentColor" stroke="none"/><path d="M24.500 14v9" stroke-width="2"/></svg>
  <div class="flex flex-col pb-[4px]">
    <span class="font-['Noto_Sans_CJK_SC',sans-serif] text-[26px] leading-[38px] font-medium">溜溜自学</span>
    <span class="-mt-px font-['DejaVu_Sans',sans-serif] text-[13px] leading-[14px]">zixue.3D66.com</span>
  </div>
</div>
</body>
</html>
